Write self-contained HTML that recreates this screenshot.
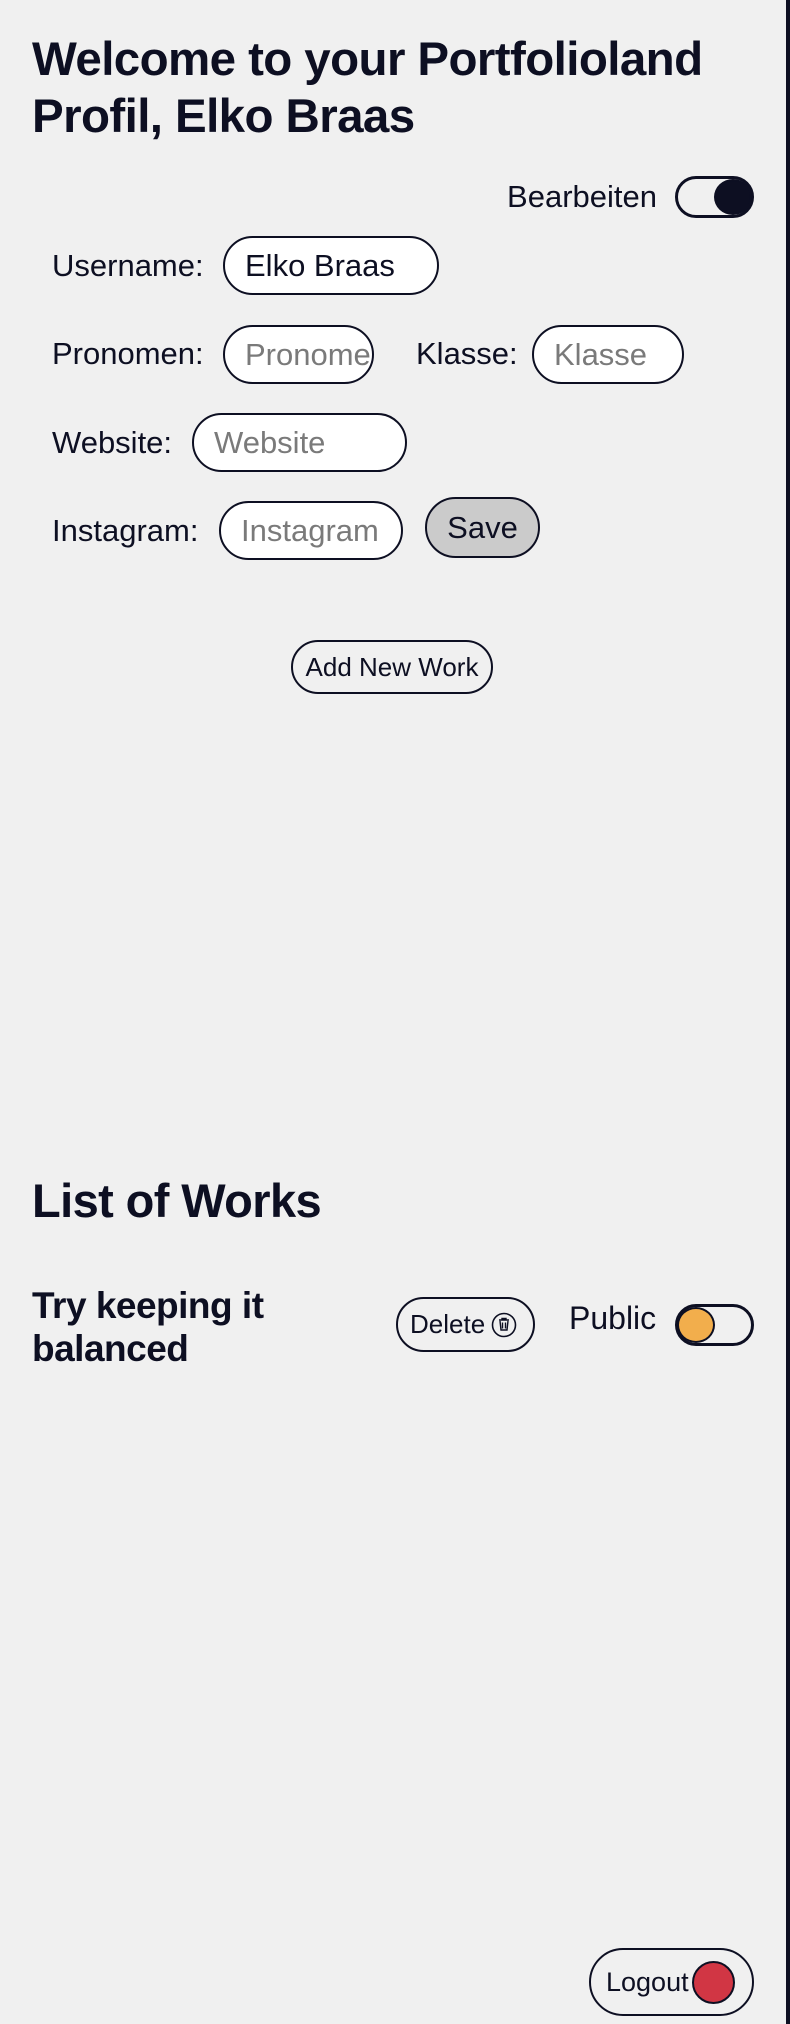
<!DOCTYPE html>
<html><head><meta charset="utf-8"><style>
*{box-sizing:border-box;margin:0;padding:0}
html,body{width:790px;height:2024px;overflow:hidden}
body{background:#f0f0f0;font-family:"Liberation Sans",Arial,sans-serif;color:#0d0f22;position:relative}
.a{position:absolute;white-space:nowrap}
.rb{position:absolute;right:0;top:0;width:4px;height:2024px;background:#0d0f22}
h1{position:absolute;left:32px;top:31px;font-size:47.5px;line-height:57px;font-weight:700;letter-spacing:-0.6px;white-space:nowrap}
.lbl{position:absolute;font-size:31px;line-height:34px;transform:translateY(-50%);white-space:nowrap}
.inp{position:absolute;background:#fff;border:2px solid #0d0f22;border-radius:40px;font-size:31px;padding-left:20px;display:flex;align-items:center;overflow:hidden;white-space:nowrap}
.ph{color:#7a7a7a}
.tog{position:absolute;border:3px solid #0d0f22;border-radius:30px;width:79px;height:42px}
.knob{position:absolute;top:0;width:38px;height:36px;border-radius:50%;border:2px solid #0d0f22}
.btn{position:absolute;border:2px solid #0d0f22;border-radius:40px;display:flex;align-items:center;justify-content:center;white-space:nowrap}
</style></head><body>
<div class="rb"></div>
<h1>Welcome to your Portfolioland<br>Profil, Elko Braas</h1>

<div class="lbl" style="right:133px;top:197px">Bearbeiten</div>
<div class="tog" style="left:675px;top:176px"><div class="knob" style="right:-1px;background:#0d0f22"></div></div>

<div class="lbl" style="left:52px;top:266px">Username:</div>
<div class="inp" style="left:223px;top:236px;width:216px;height:59px">Elko Braas</div>

<div class="lbl" style="left:52px;top:354px">Pronomen:</div>
<div class="inp" style="left:223px;top:325px;width:151px;height:59px"><span class="ph">Pronomen</span></div>
<div class="lbl" style="left:416px;top:354px">Klasse:</div>
<div class="inp" style="left:532px;top:325px;width:152px;height:59px"><span class="ph">Klasse</span></div>

<div class="lbl" style="left:52px;top:443px">Website:</div>
<div class="inp" style="left:192px;top:413px;width:215px;height:59px"><span class="ph">Website</span></div>

<div class="lbl" style="left:52px;top:531px">Instagram:</div>
<div class="inp" style="left:219px;top:501px;width:184px;height:59px"><span class="ph">Instagram</span></div>
<div class="btn" style="left:425px;top:497px;width:115px;height:61px;background:#cbcbcb;font-size:31px">Save</div>

<div class="btn" style="left:291px;top:640px;width:202px;height:54px;font-size:26px">Add New Work</div>

<div class="a" style="left:32px;top:1173px;font-size:47px;line-height:56px;font-weight:700;letter-spacing:-0.6px">List of Works</div>

<div class="a" style="left:32px;top:1284px;font-size:37px;line-height:43px;font-weight:700;letter-spacing:-0.5px">Try keeping it<br>balanced</div>

<div class="btn" style="left:396px;top:1297px;width:139px;height:55px;font-size:26px;justify-content:flex-start;padding-left:12px">Delete
<svg width="26" height="26" viewBox="0 0 26 26" style="margin-left:6px"><circle cx="13" cy="13" r="11.5" fill="none" stroke="#0d0f22" stroke-width="1.6"/><path d="M8 8h10M11 8V6.5h4V8M9 9l1 9h6l1-9M11.5 10.5v6M14.5 10.5v6" fill="none" stroke="#0d0f22" stroke-width="1.4"/></svg></div>

<div class="lbl" style="left:569px;top:1318px;font-size:32px">Public</div>
<div class="tog" style="left:675px;top:1304px"><div class="knob" style="left:-1px;background:#f2ae4c"></div></div>

<div class="btn" style="left:589px;top:1948px;width:165px;height:68px;font-size:27px;justify-content:flex-start;padding-left:15px">Logout
<div style="width:43px;height:43px;border-radius:50%;background:#d13644;border:2px solid #0d0f22;margin-left:3px"></div></div>
</body></html>
